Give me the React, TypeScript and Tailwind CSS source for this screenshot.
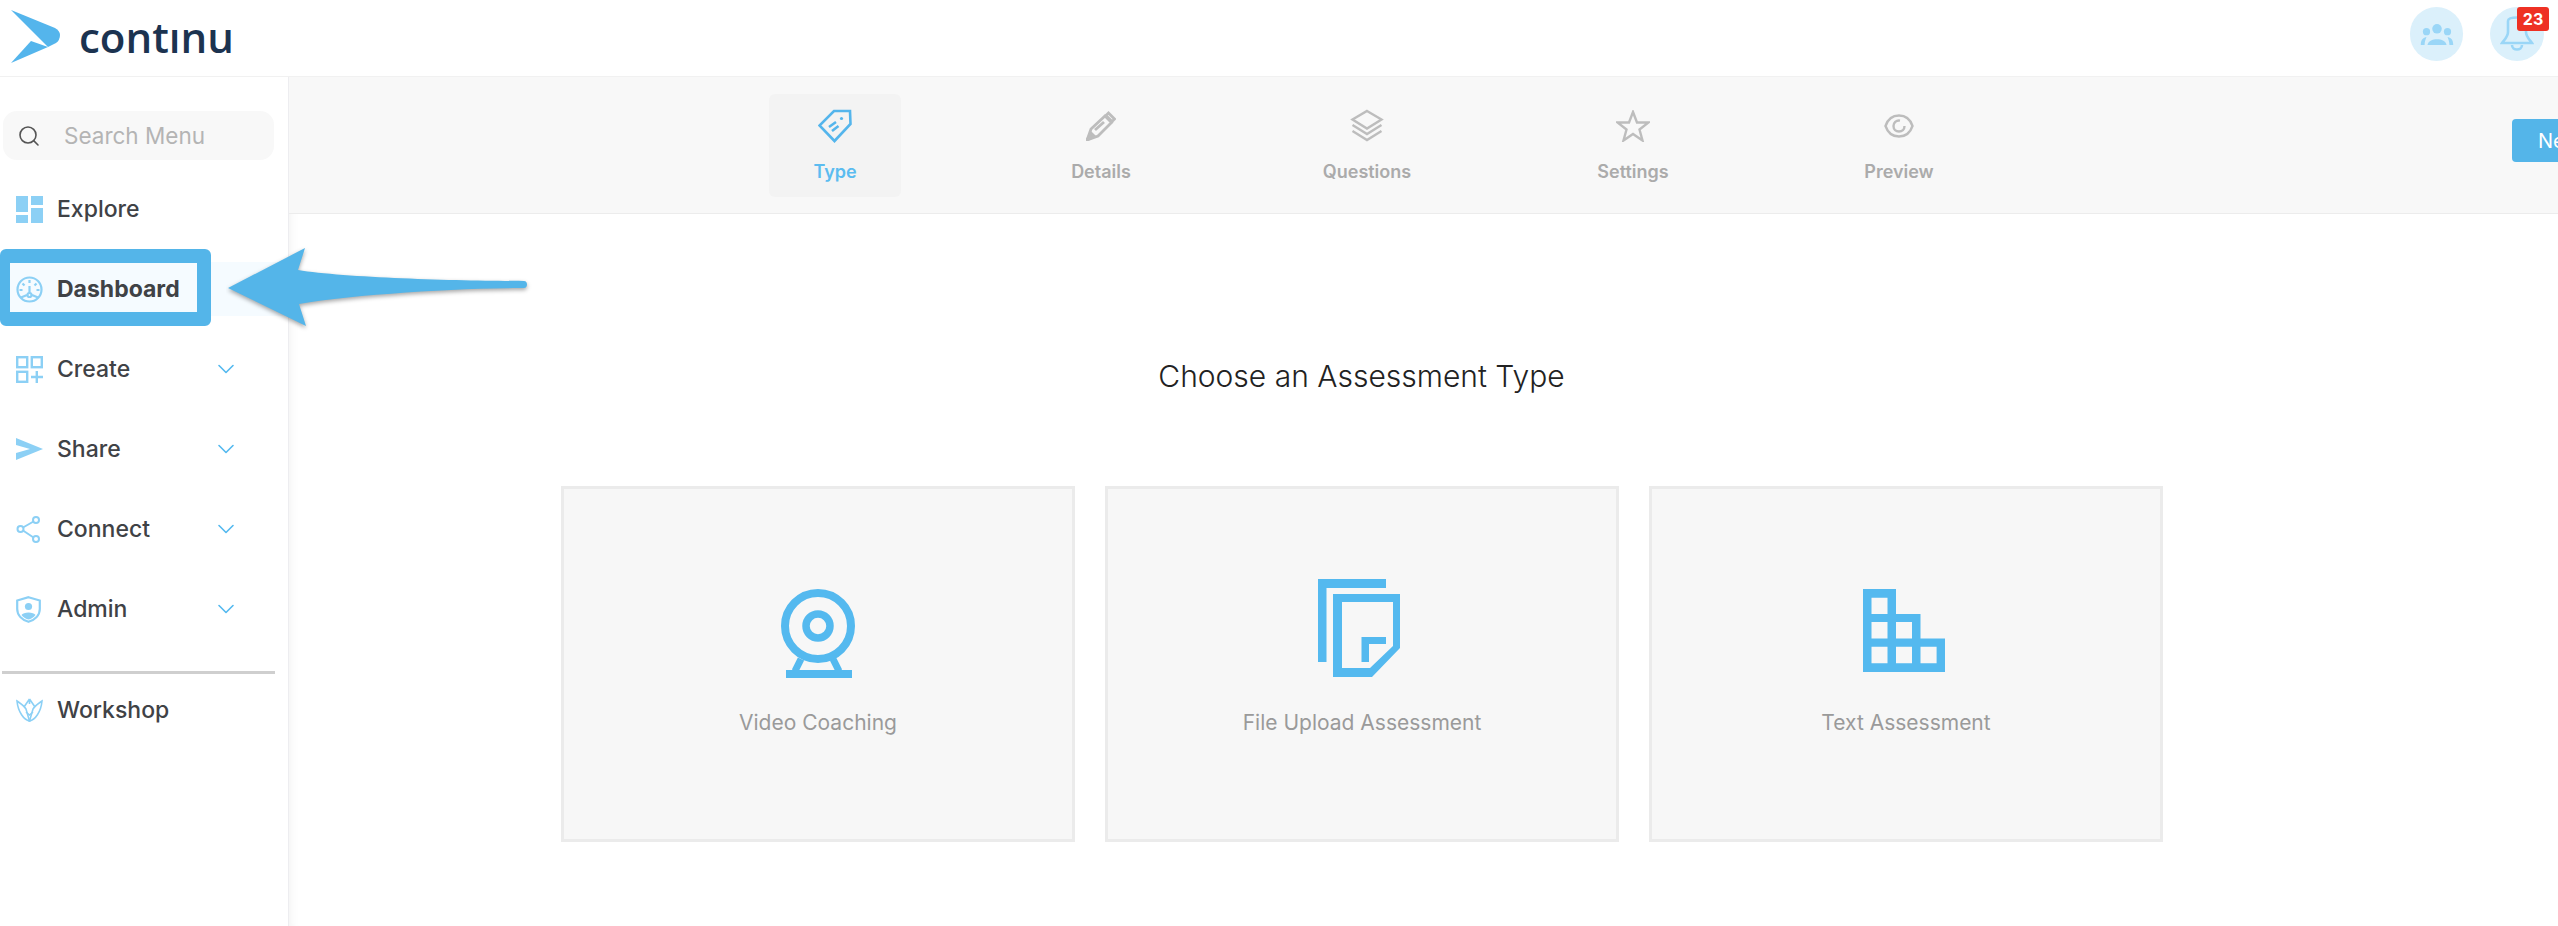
import { ChevronDown, Search } from 'lucide-react';

const INTER = "font-['Inter',sans-serif]";

function LogoMark() {
  return (
    <svg width="49" height="53" viewBox="0 0 49 53" className="shrink-0">
      <path d="M0 0 L44 18 Q49 21 49 25 Q49 30 45 33 L37 37 Z" fill="#54b5ec" />
      <path d="M20 31 L37 37 L0 53 Z" fill="#54b5ec" />
    </svg>
  );
}

function ExploreIcon() {
  return (
    <svg width="27" height="27" viewBox="0 0 27 27" fill="#8cd0f5">
      <rect x="0" y="0" width="12" height="16" />
      <rect x="15" y="0" width="12" height="9" />
      <rect x="0" y="19" width="12" height="8" />
      <rect x="15" y="12" width="12" height="15" />
    </svg>
  );
}

function DashboardIcon() {
  return (
    <svg width="27" height="27" viewBox="0 0 27 27" fill="none" stroke="#8cd0f5" strokeWidth="2.2">
      <circle cx="13.5" cy="13.5" r="12" />
      <path d="M13.5 4v3M6.5 7.5l2 2M20.5 7.5l-2 2M3.5 14h3M20.5 14h3M13.5 10v7M5 21.5l6-2.5M22 21.5l-6-2.5" />
      <circle cx="13.5" cy="19" r="2" />
    </svg>
  );
}

function CreateIcon() {
  return (
    <svg width="27" height="27" viewBox="0 0 27 27" fill="none" stroke="#8cd0f5" strokeWidth="2.4">
      <rect x="1.2" y="1.2" width="10" height="10" />
      <rect x="15.8" y="1.2" width="10" height="10" />
      <rect x="1.2" y="15.8" width="10" height="10" />
      <path d="M20.8 15v12M15 21h12" />
    </svg>
  );
}

function ShareIcon() {
  return (
    <svg width="27" height="23" viewBox="0 0 27 23" fill="#8cd0f5">
      <path d="M0 0 L27 11 L0 22 L0 15 L14 11 L0 7 Z" />
    </svg>
  );
}

function ConnectIcon() {
  return (
    <svg width="25" height="27" viewBox="0 0 25 27" fill="none" stroke="#8cd0f5" strokeWidth="2">
      <circle cx="20" cy="4" r="3" />
      <circle cx="4.5" cy="13" r="3" />
      <circle cx="20" cy="23" r="3" />
      <path d="M7 11.5 17.5 5.5M7 14.5 17.5 21.5" />
    </svg>
  );
}

function AdminIcon() {
  return (
    <svg width="25" height="27" viewBox="0 0 25 27">
      <path d="M12.5 1.2 L23.8 4.5 V13 C23.8 19.5 18.5 24 12.5 25.8 C6.5 24 1.2 19.5 1.2 13 V4.5 Z" fill="none" stroke="#8cd0f5" strokeWidth="2.2" />
      <circle cx="12.5" cy="10.5" r="3.6" fill="#8cd0f5" />
      <path d="M5.5 19 C7 15.5 18 15.5 19.5 19 C17.5 21.5 15 23 12.5 23.5 C10 23 7.5 21.5 5.5 19 Z" fill="#8cd0f5" />
    </svg>
  );
}

function WorkshopIcon() {
  return (
    <svg width="27" height="24" viewBox="0 0 27 24" fill="none" stroke="#8cd0f5" strokeWidth="1.6">
      <path d="M1 3 C4 5 8 8 10 11 L13.5 23 C8 22 2 14 1 3 Z" />
      <path d="M26 3 C23 5 19 8 17 11 L13.5 23 C19 22 25 14 26 3 Z" />
      <path d="M13.5 1 L8 9 M13.5 1 L19 9 M13.5 1 V6 M10 14 L13.5 17 L17 14" />
    </svg>
  );
}

function TagIcon() {
  return (
    <svg width="34" height="34" viewBox="0 0 34 34" fill="none" stroke="#54b5ec" strokeWidth="2.6">
      <path d="M32 2 L32.5 15 L16.5 32 L1.5 16.5 L16 2 Z" />
      <circle cx="23.5" cy="9.5" r="1.6" fill="#54b5ec" stroke="none" />
      <path d="M11 18 L18 13 M14 22 L20.5 17" />
    </svg>
  );
}

function PencilIcon() {
  return (
    <svg width="30" height="30" viewBox="0 0 30 30" fill="none" stroke="#bdbdbd" strokeWidth="2.8">
      <path d="M1 29 L1.5 28 L5 18 L19 5 L25.5 11.5 L12 25 Z" />
      <path d="M1 29 L5 22 L8 25 Z" fill="#bdbdbd" />
      <path d="M22.5 2 L28.5 8 L26 10.5 L20 4.5 Z" />
      <path d="M9 19 L18 11" />
    </svg>
  );
}

function LayersIcon() {
  return (
    <svg width="34" height="33" viewBox="0 0 34 33" fill="none" stroke="#bdbdbd" strokeWidth="2.4">
      <path d="M17 2 L31.5 10.5 L17 19.5 L2.5 10.5 Z" />
      <path d="M2.5 16 L17 25 L31.5 16" />
      <path d="M2.5 22 L17 31 L31.5 22" />
    </svg>
  );
}

function StarIcon() {
  return (
    <svg width="34" height="32" viewBox="0 0 34 32" fill="none" stroke="#bdbdbd" strokeWidth="2.4">
      <path d="M17 2 L21 12.5 L32.5 12.5 L23.5 19.5 L26.5 30.5 L17 24 L7.5 30.5 L10.5 19.5 L1.5 12.5 L13 12.5 Z" />
    </svg>
  );
}

function EyeIcon() {
  return (
    <svg width="30" height="24" viewBox="0 0 30 24" fill="none" stroke="#bdbdbd" strokeWidth="2.4">
      <path d="M1.5 12 C4 4.5 9 1.5 15 1.5 C21 1.5 26 4.5 28.5 12 C26 19.5 21 22.5 15 22.5 C9 22.5 4 19.5 1.5 12 Z" />
      <path d="M16 6.6 C12 6 9.5 9 9.5 12 C9.5 15.5 12 17.5 15 17.5 C18 17.5 20.5 15.5 20.5 12" />
    </svg>
  );
}

function WebcamIcon() {
  return (
    <svg width="74" height="89" viewBox="0 0 74 89" fill="none" stroke="#54b9ef" strokeWidth="8">
      <circle cx="37" cy="37" r="33" />
      <circle cx="37" cy="37" r="12" strokeWidth="7.5" />
      <path d="M20 70 L14 82 M52 70 L58 82" strokeWidth="7" />
      <path d="M5 85 H71" />
    </svg>
  );
}

function FilesIcon() {
  return (
    <svg width="82" height="98" viewBox="0 0 82 98" fill="#54b9ef">
      <path d="M0 0 H68 V9 H8.5 V83 H0 Z" />
      <path fillRule="evenodd" d="M15 15 H82 V69 L54 98 H15 Z M24 23 V89 H52 L75 67 V23 Z" />
      <path d="M43.5 58 H68 V65 H51 V83 H43.5 Z" />
    </svg>
  );
}

function BuildingIcon() {
  return (
    <svg width="82" height="83" viewBox="0 0 82 83" fill="#54b9ef">
      <path
        fillRule="evenodd"
        d="M0 0 H33 V25 H57.5 V49.5 H82 V83 H0 Z M8.5 8.7 V25 H24.5 V8.7 Z M8.5 33 V49.5 H24.5 V33 Z M33 33 V49.5 H49 V33 Z M8.5 57.7 V74.3 H24.5 V57.7 Z M33 57.7 V74.3 H49 V57.7 Z M57.5 57.7 V74.3 H73.6 V57.7 Z"
      />
    </svg>
  );
}

function GroupIcon() {
  return (
    <svg width="34" height="21" viewBox="0 0 34 22" fill="#9ad6f7">
      <circle cx="17" cy="5" r="5" />
      <circle cx="6" cy="8" r="3.8" />
      <circle cx="28" cy="8" r="3.8" />
      <path d="M7 22 C8 14 26 14 27 22 Z" />
      <path d="M0 22 C0 16 3 14 6 14 C5 16 4 19 4 22 Z M34 22 C34 16 31 14 28 14 C29 16 30 19 30 22 Z" />
    </svg>
  );
}

function BellIcon() {
  return (
    <svg width="34" height="36" viewBox="0 0 34 36" fill="none" stroke="#9ad6f7" strokeWidth="2.6">
      <path d="M8 5 C8 3 11 1.5 17 1.5 C23 1.5 26 3 26 5 V16 C26 21 30 24 32 27 H2 C4 24 8 21 8 16 Z" />
      <path d="M12 29 C12 35 22 35 22 29" />
    </svg>
  );
}

function ArrowCallout() {
  return (
    <svg width="310" height="90" viewBox="0 0 310 90" className="absolute left-[226px] top-[244px]">
      <path
        d="M2 44 L79 4 L72 26 C120 34 240 37 298 37 C302 37 302 44 298 44 C240 44 130 50 73 60 L80 82 Z"
        fill="#54b5e9"
        className="drop-shadow-[0_2px_2px_rgba(0,0,0,0.35)]"
      />
    </svg>
  );
}

const menu = [
  { label: 'Explore', icon: <ExploreIcon />, chevron: false },
  { label: 'Dashboard', icon: <DashboardIcon />, chevron: false, active: true },
  { label: 'Create', icon: <CreateIcon />, chevron: true },
  { label: 'Share', icon: <ShareIcon />, chevron: true },
  { label: 'Connect', icon: <ConnectIcon />, chevron: true },
  { label: 'Admin', icon: <AdminIcon />, chevron: true },
];

const steps = [
  { label: 'Type', icon: <TagIcon />, active: true },
  { label: 'Details', icon: <PencilIcon /> },
  { label: 'Questions', icon: <LayersIcon /> },
  { label: 'Settings', icon: <StarIcon /> },
  { label: 'Preview', icon: <EyeIcon /> },
];

// icons sit at slightly different heights and offsets in each card
const cards = [
  { label: 'Video Coaching', icon: <WebcamIcon />, iconClass: 'pt-[100px]' },
  { label: 'File Upload Assessment', icon: <FilesIcon />, iconClass: 'pt-[90px] mr-[7px]' },
  { label: 'Text Assessment', icon: <BuildingIcon />, iconClass: 'pt-[100px] mr-[5px]' },
];

function MenuRow({ label, icon, chevron, active }: { label: string; icon: React.ReactNode; chevron?: boolean; active?: boolean }) {
  return (
    <div className={`flex h-[54px] items-center pl-4 pr-[48px] ${active ? 'bg-[#f5fbff]' : ''}`}>
      <div className="flex w-[41px] shrink-0 items-center">{icon}</div>
      <span className={`text-[23px] text-[#3f4246] ${active ? 'font-bold' : 'font-medium'}`}>{label}</span>
      {chevron && <ChevronDown className="ml-auto text-[#54b9ef]" size={28} strokeWidth={1.4} />}
    </div>
  );
}

function Sidebar() {
  return (
    <aside className="relative flex w-[289px] shrink-0 flex-col border-r border-[#ededf0] bg-white pt-[34px]">
      <div className="mx-[3px] flex h-[49px] w-[271px] items-center rounded-[14px] bg-[#f8f8f8] pl-[14px]">
        <Search size={24} strokeWidth={1.6} className="text-[#555]" />
        <span className="ml-[23px] text-[22.5px] text-[#b4b4b4]">Search Menu</span>
      </div>
      <div className="mt-[22px] flex flex-col gap-[26px]">
        {menu.map((item) => (
          <MenuRow key={item.label} {...item} />
        ))}
      </div>
      <div className="mx-[2px] mt-[35px] h-[3px] w-[273px] bg-[#cfcfcf]" />
      <div className="mt-[9px]">
        <MenuRow label="Workshop" icon={<WorkshopIcon />} />
      </div>
      {/* callout box drawn over the Dashboard row */}
      <div className="absolute left-0 top-[172px] h-[77px] w-[211px] rounded-[6px] border-y-[14px] border-l-[10px] border-r-[14px] border-[#54b5e9]" />
    </aside>
  );
}

export default function App() {
  return (
    <div className={`relative flex h-[926px] w-full flex-col overflow-hidden bg-white ${INTER}`}>
      <header className="flex h-[77px] shrink-0 items-center border-b border-[#f1f1f1] bg-white pl-[11px]">
        <div className="mb-[3px] flex items-center">
          <LogoMark />
          <span className="ml-[19px] font-['Open_Sans',sans-serif] text-[42px] font-semibold leading-none text-[#1c3350]">contınu</span>
        </div>
        <div className="mb-[8px] ml-auto flex items-center gap-[27px] pr-[14px]">
          <div className="flex h-[54px] w-[53px] items-center justify-center rounded-full bg-[#dbf0fb]">
            <GroupIcon />
          </div>
          <div className="relative flex h-[54px] w-[54px] items-center justify-center rounded-full bg-[#dbf0fb]">
            <BellIcon />
            <span className="absolute -right-[5px] top-0 flex h-[24px] w-[32px] items-center justify-center rounded-[3px] bg-[#ee3124] text-[16px] font-bold text-white">23</span>
          </div>
        </div>
      </header>
      <div className="flex min-h-0 flex-1">
        <Sidebar />
        <main className="flex min-w-0 flex-1 flex-col shadow-[inset_10px_0_10px_-8px_rgba(0,0,0,0.05)]">
          <div className="flex h-[137px] shrink-0 items-center border-b border-[#ececec] bg-[#f8f8f8] pl-[413px]">
            {steps.map((step) => (
              <div key={step.label} className="flex w-[266px] shrink-0 justify-center">
                <div className={`flex h-[103px] w-[132px] flex-col items-center rounded-[6px] ${step.active ? 'bg-[#f3f3f3]' : ''}`}>
                  <div className="flex h-[64px] items-center justify-center">{step.icon}</div>
                  <span className={`text-[18px] font-semibold ${step.active ? 'text-[#5bbcf0]' : 'text-[#ababab]'}`}>{step.label}</span>
                </div>
              </div>
            ))}
            <button className="mb-[9px] ml-[480px] h-[43px] w-[120px] shrink-0 rounded-[4px] bg-[#54b5e9] pl-[26px] text-left text-[20px] text-white">Next</button>
          </div>
          <div className="pl-[272px]">
            <h1 className="mt-[140px] w-[1601px] text-center text-[30px] font-light text-[#222]">Choose an Assessment Type</h1>
            <div className="mt-[87px] flex gap-[30px]">
              {cards.map((card) => (
                <div key={card.label} className="flex h-[356px] w-[514px] shrink-0 flex-col items-center border-[3px] border-[#ebebeb] bg-[#f7f7f7]">
                  <div className={`h-[218px] ${card.iconClass}`}>{card.icon}</div>
                  <span className="text-[21px] text-[#9a9a9a]">{card.label}</span>
                </div>
              ))}
            </div>
          </div>
        </main>
      </div>
      <ArrowCallout />
    </div>
  );
}
